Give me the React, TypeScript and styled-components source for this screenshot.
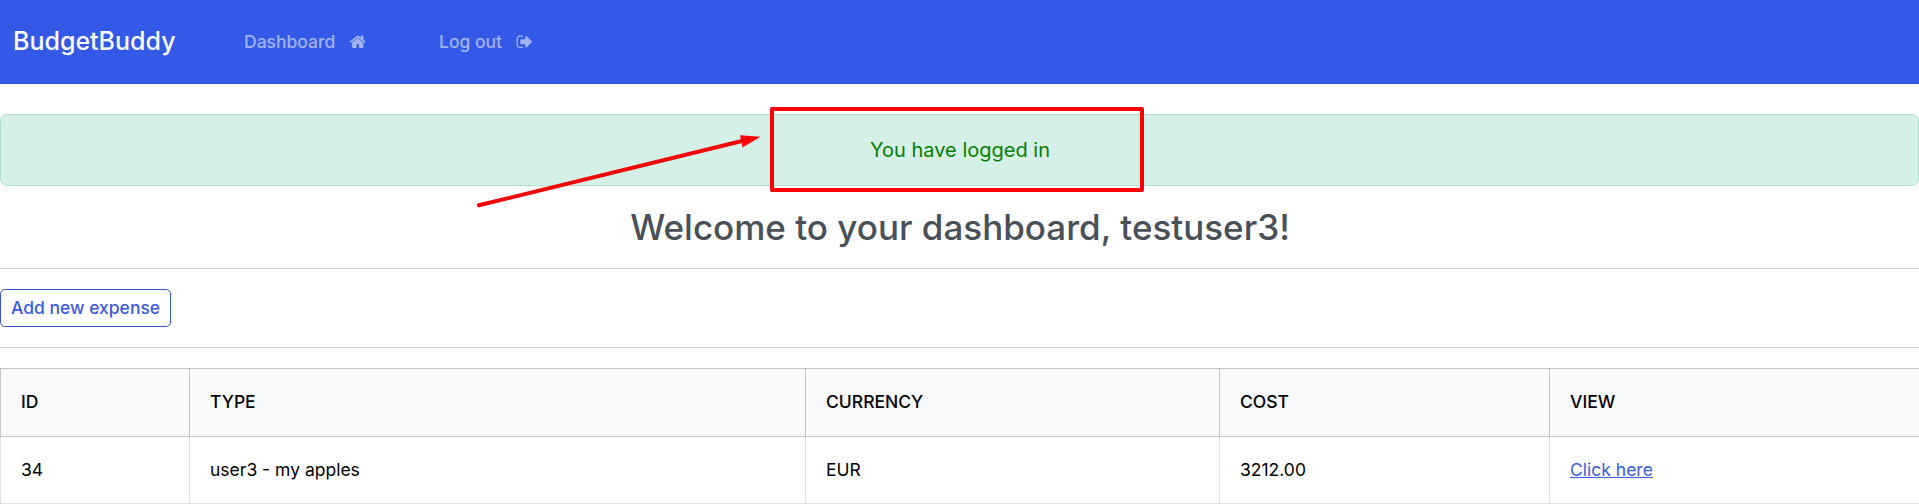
import React from "react";
import styled, { createGlobalStyle } from "styled-components";

const GlobalStyle = createGlobalStyle`
  *, *::before, *::after { box-sizing: border-box; }
  html { overflow: hidden; }
  body {
    margin: 0;
    background: #fff;
    color: #495057;
    font-family: Inter, "Liberation Sans", sans-serif;
    font-size: 17.5px;
    line-height: 1.5;
  }
`;

const Page = styled.div`
  height: 504px;
  overflow: hidden;
`;

const Navbar = styled.nav`
  display: flex;
  align-items: center;
  height: 84px;
  padding-left: 13px;
  background: #3459e6;
`;

const Brand = styled.a`
  width: 231px;
  color: #fff;
  font-size: 25px;
  font-weight: 500;
  line-height: 1.5;
  text-decoration: none;
`;

const NavLink = styled.a<{ $width?: number }>`
  display: flex;
  align-items: center;
  gap: 14px;
  width: ${(p) => (p.$width ? `${p.$width}px` : "auto")};
  color: rgba(255, 255, 255, 0.55);
  font-weight: 500;
  white-space: nowrap;
`;

const NavIcon = styled.svg`
  display: block;
  width: 17.5px;
  height: 17.5px;
  fill: currentColor;
`;

const Alert = styled.div`
  position: relative;
  display: flex;
  align-items: center;
  justify-content: center;
  height: 72px;
  margin-top: 30px;
  padding-left: 1px;
  border: 1px solid #aedfcd;
  border-radius: 7px;
  background: #d5f0e6;
  color: #008000;
  font-size: 20px;
`;

const Highlight = styled.div`
  position: absolute;
  top: -8px;
  left: 769px;
  width: 374px;
  height: 85px;
  border: 4px solid #fb0007;
  border-radius: 2px;
`;

const Arrow = styled.svg`
  position: absolute;
  top: 15px;
  left: 469px;
`;

const Title = styled.h2`
  margin: 19px 0;
  padding-left: 1px;
  font-size: 35px;
  font-weight: 500;
  line-height: 44px;
  text-align: center;
`;

const Divider = styled.hr`
  margin: 0;
  border: 0;
  border-top: 1px solid #d1d3d5;
`;

const Actions = styled.div`
  display: flex;
  padding: 20px 0;
`;

const AddButton = styled.button`
  width: 171px;
  height: 38px;
  padding: 0;
  border: 1px solid #3c57c8;
  border-radius: 5px;
  background: transparent;
  color: #3d5bdc;
  font: 500 17.5px/1.5 Inter, "Liberation Sans", sans-serif;
`;

const Table = styled.table`
  width: 1920px;
  margin-top: 20px;
  border-collapse: collapse;
  table-layout: fixed;
  color: #000;
`;

const HeadCell = styled.th<{ $width: number }>`
  width: ${(p) => p.$width}px;
  height: 68px;
  padding: 0 20px;
  border: 1px solid #c2c5c9;
  background: #f8f9fb;
  font-weight: 500;
  text-align: left;
  text-transform: uppercase;
`;

const Cell = styled.td`
  height: 67px;
  padding: 0 20px;
  border: 1px solid #dee0e3;
`;

const ViewLink = styled.a`
  color: #3d5bdc;
  text-decoration: underline;
`;

const columns = [
  { name: "ID", width: 189 },
  { name: "Type", width: 616 },
  { name: "Currency", width: 414 },
  { name: "Cost", width: 330 },
  { name: "View", width: 371 },
];

const expenses = [{ id: 34, type: "user3 - my apples", currency: "EUR", cost: "3212.00" }];

export default function App() {
  return (
    <Page>
      <GlobalStyle />
      <Navbar>
        <Brand>BudgetBuddy</Brand>
        <NavLink $width={195}>
          <span>Dashboard</span>
          <NavIcon viewBox="0 0 1792 1792">
            <path d="M1472 992v480q0 26-19 45t-45 19h-384v-384h-256v384h-384q-26 0-45-19t-19-45v-480q0-1 .5-3t.5-3l575-474 575 474q1 2 1 6zm223-69l-62 74q-8 9-21 11h-3q-13 0-21-7l-692-577-692 577q-12 8-24 7-13-2-21-11l-62-74q-8-10-7-23.5t11-21.5l719-599q32-26 76-26t76 26l244 204v-195q0-14 9-23t23-9h192q14 0 23 9t9 23v408l219 182q10 8 11 21.5t-7 23.5z" />
          </NavIcon>
        </NavLink>
        <NavLink>
          <span>Log out</span>
          <NavIcon viewBox="0 0 1792 1792">
            <path d="M704 1440q0 4 1 20t.5 26.5-3 23.5-10 19.5-20.5 6.5h-320q-119 0-203.5-84.5t-84.5-203.5v-704q0-119 84.5-203.5t203.5-84.5h320q13 0 22.5 9.5t9.5 22.5q0 4 1 20t.5 26.5-3 23.5-10 19.5-20.5 6.5h-320q-66 0-113 47t-47 113v704q0 66 47 113t113 47h312l11.5 1 11.5 3 8 5.5 7 9 2 13.5zm928-544q0 26-19 45l-544 544q-19 19-45 19t-45-19-19-45v-288h-448q-26 0-45-19t-19-45v-384q0-26 19-45t45-19h448v-288q0-26 19-45t45-19 45 19l544 544q19 19 19 45z" />
          </NavIcon>
        </NavLink>
      </Navbar>
      <Alert>
        You have logged in
        <Highlight />
        <Arrow width="300" height="85" viewBox="470 130 300 85">
          <path d="M479 205.3L743 140.8" stroke="#f00808" strokeWidth="4" strokeLinecap="round" />
          <path d="M740 135.3L760.5 136.8L742.5 147.5Z" fill="#fb0007" />
        </Arrow>
      </Alert>
      <Title>Welcome to your dashboard, testuser3!</Title>
      <Divider />
      <Actions>
        <AddButton>Add new expense</AddButton>
      </Actions>
      <Divider />
      <Table>
        <thead>
          <tr>
            {columns.map((c) => (
              <HeadCell key={c.name} $width={c.width}>{c.name}</HeadCell>
            ))}
          </tr>
        </thead>
        <tbody>
          {expenses.map((e) => (
            <tr key={e.id}>
              <Cell>{e.id}</Cell>
              <Cell>{e.type}</Cell>
              <Cell>{e.currency}</Cell>
              <Cell>{e.cost}</Cell>
              <Cell><ViewLink>Click here</ViewLink></Cell>
            </tr>
          ))}
        </tbody>
      </Table>
    </Page>
  );
}
